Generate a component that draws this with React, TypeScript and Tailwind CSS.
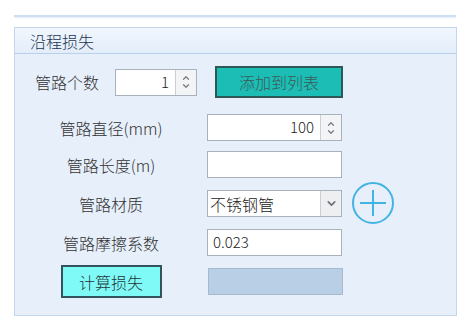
import { ChevronUp, ChevronDown } from 'lucide-react'

const cjk = { fontFamily: '"Noto Sans CJK SC", "Noto Sans", sans-serif' }

function Spinner() {
  return (
    <div className="flex h-full w-[21px] flex-col items-center justify-center border-l border-[#c9cfd6] bg-[#f3f4f6] text-[#7a7e84]">
      <ChevronUp size={10} strokeWidth={3} className="-mb-[1px]" />
      <ChevronDown size={10} strokeWidth={3} className="-mt-[1px]" />
    </div>
  )
}

function Label({ children }: { children: React.ReactNode }) {
  return <div className="w-[192px] text-center text-[16px] text-[#333]">{children}</div>
}

export default function App() {
  return (
    <div className="h-[320px] w-[469px] bg-white font-light" style={cjk}>
      <div className="pt-[15px]">
        <div className="mx-[14px] h-[2px] w-[442px] bg-[#cfdff2] shadow-[0_1px_2px_#e3edf9]" />
      </div>

      {/* panel */}
      <div className="mx-[14px] mt-[10px] h-[289px] w-[443px] border border-[#c3d6ec] bg-[#e7effb]">
        <div className="flex h-[26px] items-center border-b border-[#b9d0ea] bg-gradient-to-b from-[#f1f7fe] to-[#e3edfa] pl-[15px] text-[16px] text-[#1f3550]">
          沿程损失
        </div>

        {/* row 1 */}
        <div className="mt-[12px] flex h-[32px] items-center">
          <div className="ml-[20px] w-[80px] text-[16px] text-[#333]">管路个数</div>
          <div className="flex h-[27px] w-[82px] items-stretch border border-[#a9b2bc] bg-white">
            <div className="flex flex-1 items-center justify-end pr-[6px] text-[15px] text-[#222]">1</div>
            <Spinner />
          </div>
          <button className="ml-[18px] flex h-[32px] w-[128px] items-center justify-center border-2 border-[#2d5856] bg-[#1bbdb4] text-[16px] text-[#3b5a58]">
            添加到列表
          </button>
        </div>

        {/* row 2 */}
        <div className="mt-[16px] flex h-[27px] items-center">
          <Label>管路直径(mm)</Label>
          <div className="flex h-[27px] w-[135px] items-stretch border border-[#a9b2bc] bg-white">
            <div className="flex flex-1 items-center justify-end pr-[6px] text-[15px] text-[#222]">100</div>
            <Spinner />
          </div>
        </div>

        {/* row 3 */}
        <div className="mt-[10px] flex h-[27px] items-center">
          <Label>管路长度(m)</Label>
          <div className="h-[27px] w-[135px] border border-[#a9b2bc] bg-white" />
        </div>

        {/* row 4 */}
        <div className="mt-[12px] flex h-[27px] items-center">
          <Label>管路材质</Label>
          <div className="flex h-[27px] w-[135px] items-stretch border border-[#a9b2bc] bg-white">
            <div className="flex flex-1 items-center pl-[2px] text-[16px] text-[#222]">不锈钢管</div>
            <div className="flex w-[21px] items-center justify-center border-l border-[#c9cfd6] bg-[#eeeff1] text-[#6b6f75]">
              <ChevronDown size={13} strokeWidth={3} />
            </div>
          </div>
          <svg className="-my-[8px] ml-[9px]" width="44" height="44" viewBox="0 0 44 44">
            <circle cx="22" cy="21" r="20" fill="none" stroke="#42b4e4" strokeWidth="2" />
            <path d="M9 21H35M22 8V34" stroke="#42b4e4" strokeWidth="2" />
          </svg>
        </div>

        {/* row 5 */}
        <div className="mt-[12px] flex h-[27px] items-center">
          <Label>管路摩擦系数</Label>
          <div className="flex h-[27px] w-[135px] items-center border border-[#a9b2bc] bg-white pl-[5px] text-[15px] text-[#222]">
            0.023
          </div>
        </div>

        {/* row 6 */}
        <div className="mt-[9px] flex h-[33px] items-center">
          <div className="flex w-[192px] justify-center">
            <button className="flex h-[33px] w-[101px] items-center justify-center border-2 border-[#34535c] bg-[#80faf6] text-[16px] text-[#23363a]">
              计算损失
            </button>
          </div>
          <div className="ml-[1px] h-[27px] w-[135px] border border-[#a6bacd] bg-[#b9cfe6]" />
        </div>
      </div>
    </div>
  )
}
